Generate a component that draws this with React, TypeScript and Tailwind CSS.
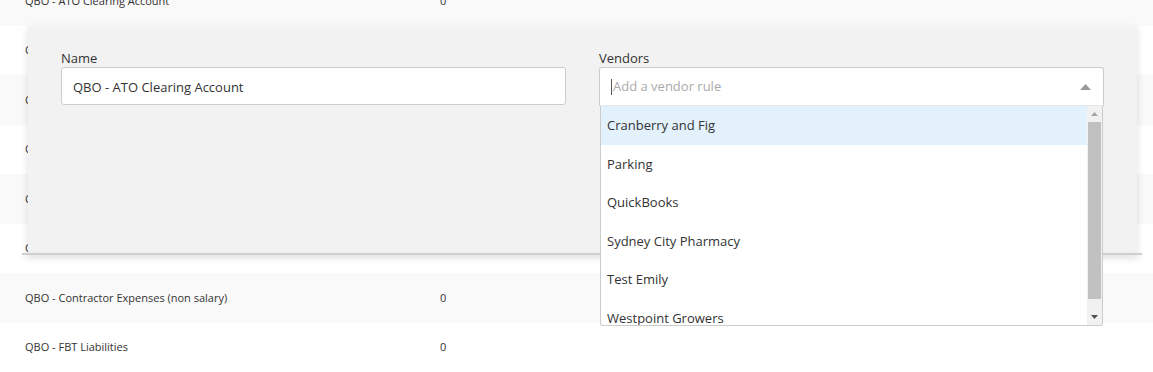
import React from 'react';

const rows = [
  { name: 'QBO - ATO Clearing Account', value: '0' },
  { name: 'QBO - Accounts Payable', value: '0' },
  { name: 'QBO - Accounts Receivable', value: '0' },
  { name: 'QBO - Bank Charges', value: '0' },
  { name: 'QBO - Cash on Hand', value: '0' },
  { name: 'QBO - Computer Equipment', value: '0' },
  { name: 'QBO - Contractor Expenses (non salary)', value: '0' },
  { name: 'QBO - FBT Liabilities', value: '0' },
];

const vendors = ['Cranberry and Fig', 'Parking', 'QuickBooks', 'Sydney City Pharmacy', 'Test Emily', 'Westpoint Growers'];

function Row({ name, value, shaded }: { name: string; value: string; shaded: boolean }) {
  return (
    <div className={`flex items-center h-[49.5px] text-[11px] text-[#333] ${shaded ? 'bg-[#f9f9f9]' : 'bg-white'}`}>
      <span className="pl-[25px] w-[440px] shrink-0">{name}</span>
      <span>{value}</span>
    </div>
  );
}

export default function App() {
  return (
    <div
      className="relative w-[1153px] h-[372px] overflow-hidden bg-white"
      style={{ fontFamily: '"Open Sans", "Noto Sans", sans-serif' }}
    >
      <div className="-mt-[24px]">
        {rows.map((r, i) => (
          <Row key={i} name={r.name} value={r.value} shaded={i % 2 === 0} />
        ))}
      </div>

      {/* expanded editor panel */}
      <div className="absolute left-[28px] top-[27px] w-[1109px] h-[227px] bg-[#f2f2f2] shadow-[0_2px_8px_rgba(0,0,0,0.12)]">
        <div className="grid grid-cols-2 gap-[33px] px-[33px] pt-[23px]">
          <div>
            <div className="text-[13px] leading-[17px] text-[#333]">Name</div>
            <div className="h-[38px] bg-white border border-[#ccc] rounded-[3px] flex items-center px-[11px] pt-[3px] text-[13px] text-[#333]">
              QBO - ATO Clearing Account
            </div>
          </div>
          <div className="relative z-10">
            <div className="text-[13px] leading-[17px] text-[#333]">Vendors</div>
            <div className="h-[39px] bg-white border border-[#ccc] border-b-[#e6e6e6] rounded-t-[3px] flex items-center pl-[11px] pr-[12px] text-[13px]">
              <span className="w-px h-[16px] bg-[#555]" />
              <span className="text-[#aaa] ml-[1px] flex-1">Add a vendor rule</span>
              <svg width="11" height="6" viewBox="0 0 11 6" className="text-[#999]">
                <path d="M0 6 L5.5 0 L11 6 Z" fill="currentColor" />
              </svg>
            </div>
            {/* open dropdown list */}
            <div className="absolute left-[1px] top-[56px] w-[503px] h-[220px] bg-white border border-[#ccc] border-t-0 rounded-b-[3px] flex overflow-hidden">
              <div className="flex-1 overflow-hidden">
                {vendors.map((v, i) => (
                  <div
                    key={v}
                    className={`h-[38.5px] flex items-center pl-[6px] pt-[1px] text-[13px] text-[#333] ${i === 0 ? 'bg-[#e3f1fd]' : ''}`}
                  >
                    {v}
                  </div>
                ))}
              </div>
              <div className="w-[15px] bg-[#f1f1f1] flex flex-col items-center">
                <svg width="7" height="4" viewBox="0 0 7 4" className="mt-[6px] text-[#a3a3a3]">
                  <path d="M0 4 L3.5 0 L7 4 Z" fill="currentColor" />
                </svg>
                <div className="w-[13px] h-[177px] bg-[#c1c1c1] mt-[6px]" />
                <div className="flex-1" />
                <svg width="7" height="4" viewBox="0 0 7 4" className="mb-[6px] text-[#505050]">
                  <path d="M0 0 L3.5 4 L7 0 Z" fill="currentColor" />
                </svg>
              </div>
            </div>
          </div>
        </div>
      </div>
      <div className="absolute left-[22px] top-[253px] w-[1120px] h-[2px] bg-[#cfcfcf] shadow-[0_3px_6px_rgba(0,0,0,0.12)]" />
      {/* keep dropdown above the panel's bottom edge line */}
    </div>
  );
}
